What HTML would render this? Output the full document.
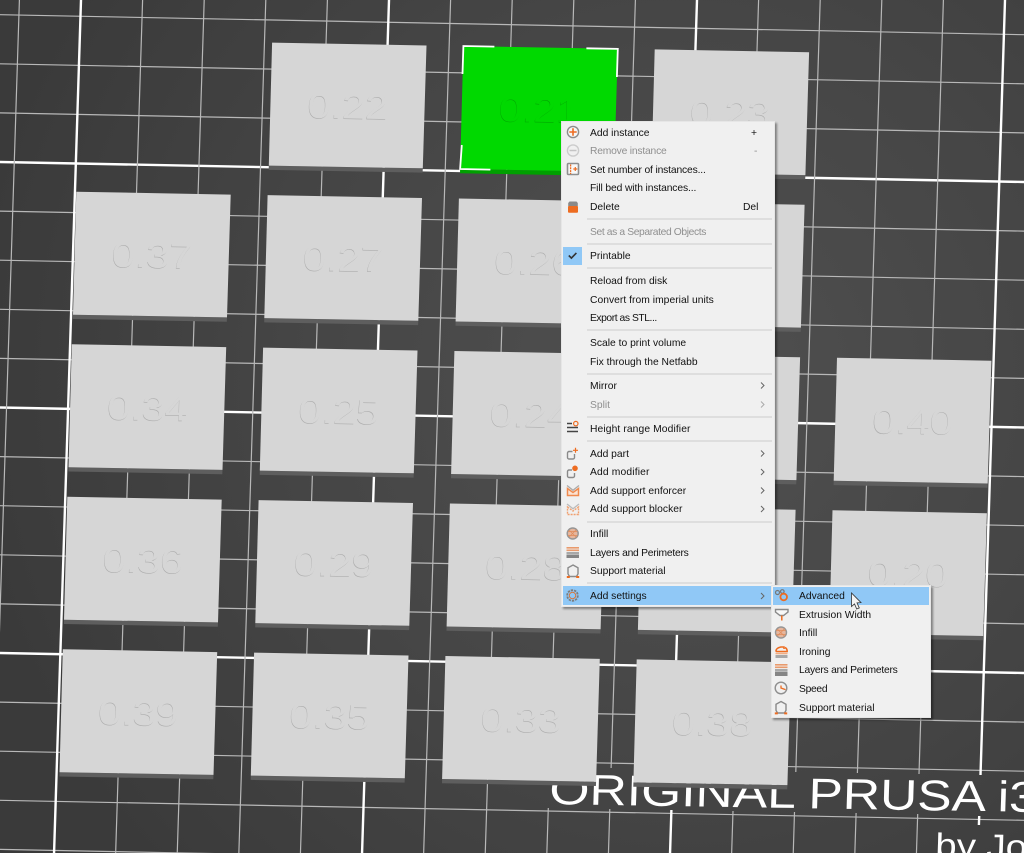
<!DOCTYPE html>
<html><head><meta charset="utf-8"><title>PrusaSlicer</title>
<style>
html,body{margin:0;padding:0;background:#414141}
body{width:1024px;height:853px;position:relative;overflow:hidden;font-family:"Liberation Sans",sans-serif}
svg{position:absolute;left:0;top:0}
.lb{font-family:"Liberation Sans",sans-serif;font-size:35px}
.menu{position:absolute;background:#f0f0f0;border:1px solid #e6e6e6;box-sizing:border-box;box-shadow:2px 2px 2px rgba(0,0,0,.4)}
.h{position:absolute;background:#90c8f6}
.s{position:absolute;left:587px;width:185px;height:2px;background:#dedede}
.t{position:absolute;font-size:10.3px;line-height:14px;color:#111;white-space:nowrap;left:590px;margin-top:1.5px;filter:blur(.2px)}
.d{color:#8f8f8f}
.u{left:799px}
.a{left:auto;text-align:right}
.ic{filter:blur(.25px)}
</style></head><body>
<svg width="1024" height="853" viewBox="0 0 1024 853">
<defs>
<radialGradient id="bg" gradientUnits="userSpaceOnUse" cx="680" cy="380" r="720">
<stop offset="0" stop-color="#505050"/><stop offset=".55" stop-color="#454545"/><stop offset="1" stop-color="#3a3a3a"/></radialGradient>
<g id="p"><polygon points="-3.3,123 150.7,125.7 150.5,130 -3.4,127.3" fill="#5e5e5e"/><polygon points="0,0 154.4,2.9 150.7,125.7 -3.3,123" fill="#d6d6d6"/></g>
</defs>
<rect width="1024" height="853" fill="url(#bg)"/>
<path fill="none" stroke="#b8b8b8" stroke-width="1.2" d="M0 14.7L1024 34.7M0 63.8L1024 83.8M0 112.9L1024 132.9M0 211.1L1024 231.1M0 260.2L1024 280.2M0 309.3L1024 329.3M0 358.4L1024 378.4M0 456.6L1024 476.6M0 505.7L1024 525.7M0 554.8L1024 574.8M0 603.9L1024 623.9M0 702.1L1024 722.1M0 751.2L1024 771.2M0 800.3L1024 820.3M0 849.4L1024 869.4"/>
<path fill="none" stroke="#ffffff" stroke-width="2.4" d="M0 162L1024 182M0 407.5L1024 427.5M0 653L1024 673"/>
<path fill="none" stroke="#b8b8b8" stroke-width="1.2" d="M19.4 0L-7.55 853M142.6 0L115.65 853M204.2 0L177.25 853M265.8 0L238.85 853M327.4 0L300.45 853M450.6 0L423.65 853M512.2 0L485.25 853M573.8 0L549.6 767M548.3 808L546.85 853M635.4 0L611.1 768M609.8 809L608.45 853M758.6 0L734.3 770M733 811L731.65 853M820.2 0L795.8 772M794.5 812L793.25 853M881.8 0L857.4 773M856.1 813L854.85 853M943.4 0L919 774M917.7 814L916.45 853"/>
<path fill="none" stroke="#ffffff" stroke-width="2.4" d="M81 0L54.05 853M389 0L362.05 853M697 0L672.7 769M671.4 810L670.05 853M1005 0L980.5 775M979.2 816L978.9 825"/>

<text transform="matrix(1.2,.0195,-.03,1,549,804)" font-family="Liberation Sans" font-size="43" fill="#fff">ORIGINAL PRUSA i3</text>
<text transform="matrix(1.13,.0195,-.03,1,935,857)" font-family="Liberation Sans" font-size="34" fill="#fff">by Josef Prusa</text>

<g transform="translate(272.1,42.6)"><use href="#p"/><g class="lb"><text transform="matrix(1.18,.0195,-.03,1,34.8,75.8)" fill="#adadad">0.22</text><text transform="matrix(1.18,.0195,-.03,1,35.2,75.2)" fill="#d6d6d6">0.22</text></g></g>
<g transform="translate(463.4,46)"><polygon points="-3.3,123 150.7,125.7 150.5,130 -3.4,127.3" fill="#00a000"/><polygon points="0,0 154.4,2.9 150.7,125.7 -3.3,123" fill="#00d900"/><g class="lb"><text transform="matrix(1.18,.0195,-.03,1,34.8,75.8)" fill="#00a800">0.21</text><text transform="matrix(1.18,.0195,-.03,1,35.2,75.2)" fill="#00d900">0.21</text></g>
<path fill="none" stroke="#fff" stroke-width="1.8" d="M31 .6L0 0L-.9 28M123 2.3L154.4 2.9L153.5 31M-1.6 99L-3.3 123L27 123.6"/></g>
<g transform="translate(654.7,49.4)"><use href="#p"/><g class="lb"><text transform="matrix(1.18,.0195,-.03,1,34.8,75.8)" fill="#adadad">0.23</text><text transform="matrix(1.18,.0195,-.03,1,35.2,75.2)" fill="#d6d6d6">0.23</text></g></g>

<g transform="translate(76.3,191.7)"><use href="#p"/><g class="lb"><text transform="matrix(1.18,.0195,-.03,1,34.8,75.8)" fill="#adadad">0.37</text><text transform="matrix(1.18,.0195,-.03,1,35.2,75.2)" fill="#d6d6d6">0.37</text></g></g>
<g transform="translate(267.6,195.1)"><use href="#p"/><g class="lb"><text transform="matrix(1.18,.0195,-.03,1,34.8,75.8)" fill="#adadad">0.27</text><text transform="matrix(1.18,.0195,-.03,1,35.2,75.2)" fill="#d6d6d6">0.27</text></g></g>
<g transform="translate(458.9,198.5)"><use href="#p"/><g class="lb"><text transform="matrix(1.18,.0195,-.03,1,34.8,75.8)" fill="#adadad">0.26</text><text transform="matrix(1.18,.0195,-.03,1,35.2,75.2)" fill="#d6d6d6">0.26</text></g></g>
<g transform="translate(650.2,201.9)"><use href="#p"/></g>

<g transform="translate(71.8,344.2)"><use href="#p"/><g class="lb"><text transform="matrix(1.18,.0195,-.03,1,34.8,75.8)" fill="#adadad">0.34</text><text transform="matrix(1.18,.0195,-.03,1,35.2,75.2)" fill="#d6d6d6">0.34</text></g></g>
<g transform="translate(263.1,347.6)"><use href="#p"/><g class="lb"><text transform="matrix(1.18,.0195,-.03,1,34.8,75.8)" fill="#adadad">0.25</text><text transform="matrix(1.18,.0195,-.03,1,35.2,75.2)" fill="#d6d6d6">0.25</text></g></g>
<g transform="translate(454.4,351)"><use href="#p"/><g class="lb"><text transform="matrix(1.18,.0195,-.03,1,34.8,75.8)" fill="#adadad">0.24</text><text transform="matrix(1.18,.0195,-.03,1,35.2,75.2)" fill="#d6d6d6">0.24</text></g></g>
<g transform="translate(645.7,354.4)"><use href="#p"/></g>
<g transform="translate(837,357.8)"><use href="#p"/><g class="lb"><text transform="matrix(1.18,.0195,-.03,1,34.8,75.8)" fill="#adadad">0.40</text><text transform="matrix(1.18,.0195,-.03,1,35.2,75.2)" fill="#d6d6d6">0.40</text></g></g>

<g transform="translate(67.3,496.7)"><use href="#p"/><g class="lb"><text transform="matrix(1.18,.0195,-.03,1,34.8,75.8)" fill="#adadad">0.36</text><text transform="matrix(1.18,.0195,-.03,1,35.2,75.2)" fill="#d6d6d6">0.36</text></g></g>
<g transform="translate(258.6,500.1)"><use href="#p"/><g class="lb"><text transform="matrix(1.18,.0195,-.03,1,34.8,75.8)" fill="#adadad">0.29</text><text transform="matrix(1.18,.0195,-.03,1,35.2,75.2)" fill="#d6d6d6">0.29</text></g></g>
<g transform="translate(449.9,503.5)"><use href="#p"/><g class="lb"><text transform="matrix(1.18,.0195,-.03,1,34.8,75.8)" fill="#adadad">0.28</text><text transform="matrix(1.18,.0195,-.03,1,35.2,75.2)" fill="#d6d6d6">0.28</text></g></g>
<g transform="translate(641.2,506.9)"><use href="#p"/></g>
<g transform="translate(832.5,510.3)"><use href="#p"/><g class="lb"><text transform="matrix(1.18,.0195,-.03,1,34.8,75.8)" fill="#adadad">0.20</text><text transform="matrix(1.18,.0195,-.03,1,35.2,75.2)" fill="#d6d6d6">0.20</text></g></g>

<g transform="translate(62.8,649.2)"><use href="#p"/><g class="lb"><text transform="matrix(1.18,.0195,-.03,1,34.8,75.8)" fill="#adadad">0.39</text><text transform="matrix(1.18,.0195,-.03,1,35.2,75.2)" fill="#d6d6d6">0.39</text></g></g>
<g transform="translate(254.1,652.6)"><use href="#p"/><g class="lb"><text transform="matrix(1.18,.0195,-.03,1,34.8,75.8)" fill="#adadad">0.35</text><text transform="matrix(1.18,.0195,-.03,1,35.2,75.2)" fill="#d6d6d6">0.35</text></g></g>
<g transform="translate(445.4,656)"><use href="#p"/><g class="lb"><text transform="matrix(1.18,.0195,-.03,1,34.8,75.8)" fill="#adadad">0.33</text><text transform="matrix(1.18,.0195,-.03,1,35.2,75.2)" fill="#d6d6d6">0.33</text></g></g>
<g transform="translate(636.7,659.4)"><use href="#p"/><g class="lb"><text transform="matrix(1.18,.0195,-.03,1,34.8,75.8)" fill="#adadad">0.38</text><text transform="matrix(1.18,.0195,-.03,1,35.2,75.2)" fill="#d6d6d6">0.38</text></g></g>
</svg>

<div class="menu" style="left:561px;top:121px;width:214px;height:486px"></div>
<div class="h" style="left:563px;top:247px;width:19px;height:18px"></div>
<div class="h" style="left:563px;top:586px;width:208px;height:19px"></div>
<div class="s" style="top:218px"></div><div class="s" style="top:243px"></div><div class="s" style="top:267px"></div><div class="s" style="top:329px"></div><div class="s" style="top:373px"></div><div class="s" style="top:416px"></div><div class="s" style="top:440px"></div><div class="s" style="top:521px"></div><div class="s" style="top:582px"></div>

<div class="t" style="top:125px">Add instance</div>
<div class="t d" style="top:143.5px;letter-spacing:-.2px">Remove instance</div>
<div class="t" style="top:162px;letter-spacing:-.15px">Set number of instances...</div>
<div class="t" style="top:180.5px;letter-spacing:-.12px">Fill bed with instances...</div>
<div class="t" style="top:199px">Delete</div>
<div class="t d" style="top:224px;letter-spacing:-.38px">Set as a Separated Objects</div>
<div class="t" style="top:248.5px">Printable</div>
<div class="t" style="top:273px">Reload from disk</div>
<div class="t" style="top:292px;letter-spacing:.03px">Convert from imperial units</div>
<div class="t" style="top:310.5px;letter-spacing:-.44px">Export as STL...</div>
<div class="t" style="top:335px">Scale to print volume</div>
<div class="t" style="top:354px">Fix through the Netfabb</div>
<div class="t" style="top:378px">Mirror</div>
<div class="t d" style="top:397px">Split</div>
<div class="t" style="top:421.5px;letter-spacing:.1px">Height range Modifier</div>
<div class="t" style="top:446px">Add part</div>
<div class="t" style="top:464.5px;letter-spacing:.15px">Add modifier</div>
<div class="t" style="top:483px">Add support enforcer</div>
<div class="t" style="top:501.5px;letter-spacing:.05px">Add support blocker</div>
<div class="t" style="top:526.5px">Infill</div>
<div class="t" style="top:545px;letter-spacing:-.24px">Layers and Perimeters</div>
<div class="t" style="top:563.5px">Support material</div>
<div class="t" style="top:588.5px">Add settings</div>
<div class="t a" style="top:125px;left:751px">+</div>
<div class="t a d" style="top:143.5px;left:754px">-</div>
<div class="t a" style="top:199px;left:743px">Del</div>

<div class="menu" style="left:771px;top:585px;width:160px;height:133px"></div>
<div class="h" style="left:773px;top:586.5px;width:156px;height:18px"></div>
<div class="t u" style="top:588.5px">Advanced</div>
<div class="t u" style="top:607px">Extrusion Width</div>
<div class="t u" style="top:625.5px">Infill</div>
<div class="t u" style="top:644px">Ironing</div>
<div class="t u" style="top:662.5px;letter-spacing:-.24px">Layers and Perimeters</div>
<div class="t u" style="top:681px;letter-spacing:-.3px">Speed</div>
<div class="t u" style="top:700px">Support material</div>

<svg class="ic" width="1024" height="853" viewBox="0 0 1024 853" fill="none">
<!-- chevrons -->
<path stroke="#666" stroke-width="1" d="M761 382.5l3 3-3 3M761 450.5l3 3-3 3M761 469l3 3-3 3M761 487.5l3 3-3 3M761 506l3 3-3 3M761 593l3 3-3 3"/>
<path stroke="#aaa" stroke-width="1" d="M761 401.5l3 3-3 3"/>
<!-- check -->
<path stroke="#333" stroke-width="1.6" d="M568.8 255.5l2.6 2.6 5-5.2"/>
<!-- add / remove -->
<circle cx="573" cy="132" r="5.6" stroke="#8c8c8c" stroke-width="1.4" fill="#f6f6f6"/>
<path stroke="#ed6c21" stroke-width="1.6" d="M569.3 132h7.4M573 128.3v7.4"/>
<circle cx="573" cy="150.5" r="5.6" stroke="#cccccc" stroke-width="1.4"/>
<path stroke="#c4c4c4" stroke-width="1.5" d="M569.5 150.5h7"/>
<!-- set number -->
<rect x="567.5" y="163.5" width="11" height="11" rx="1" stroke="#8f8f8f" stroke-width="1.6" fill="#f8f8f8"/>
<path stroke="#ed6c21" stroke-width="1.3" d="M570.6 164.5v9.5" stroke-dasharray="2 .8"/>
<path stroke="#ed6c21" stroke-width="1.2" d="M573.3 169h4M575.3 167v4"/>
<!-- delete -->
<path fill="#8a8a8a" d="M569.5 201.5h7l1.3 1.5v3.2h-9.6V203z"/>
<rect x="568" y="206" width="10" height="6.8" rx="1" fill="#ed6c21"/>
<!-- height range -->
<path stroke="#444" stroke-width="1.4" d="M567 423.5h5M567 427.5h11M567 431.5h11"/>
<circle cx="575.8" cy="423.6" r="2.2" stroke="#ed6c21" stroke-width="1.2"/>
<!-- add part -->
<path stroke="#8a8a8a" stroke-width="1.4" d="M572.5 451.5H569a1.5 1.5 0 0 0-1.5 1.5v4.5a1.5 1.5 0 0 0 1.5 1.5h4a1.5 1.5 0 0 0 1.5-1.5V454"/>
<path stroke="#ed6c21" stroke-width="1.2" d="M573 450.3h5M575.5 447.8v5"/>
<!-- add modifier -->
<path stroke="#8a8a8a" stroke-width="1.4" d="M572 470H569a1.5 1.5 0 0 0-1.5 1.5v4.5a1.5 1.5 0 0 0 1.5 1.5h4a1.5 1.5 0 0 0 1.5-1.5V473"/>
<circle cx="575" cy="468.3" r="2.8" fill="#ed6c21"/>
<!-- enforcer -->
<path stroke="#aaa" stroke-width="1.3" d="M567 485.5l6 4.8 6-4.8"/>
<path stroke="#ef8a4e" stroke-width="1.5" fill="#fbe3d3" d="M567.5 488.5l5.5 4 5.5-4v7h-11z"/>
<!-- blocker -->
<path stroke="#bbb" stroke-width="1.3" d="M567 504l6 4.8 6-4.8"/>
<path stroke="#f0a070" stroke-width="1.4" stroke-dasharray="2 1" d="M567.5 507l5.5 4 5.5-4v7.5h-11z"/>
<!-- infill -->
<circle cx="572.7" cy="533.5" r="5.5" fill="#e6b69d" stroke="#969696" stroke-width="1.4"/>
<path stroke="#e08a58" stroke-width=".7" d="M569 530l7.5 7.5M569 537l7.5-7.5M567.8 531.5h9.8M567.8 535.5h9.8"/>
<!-- layers -->
<g><rect x="566.5" y="547" width="12.5" height="1.6" fill="#e99a6c"/><rect x="566.5" y="549.5" width="12.5" height="1.6" fill="#e99a6c"/><rect x="566.5" y="552" width="12.5" height="2" fill="#a8a8a8"/><rect x="566.5" y="554.5" width="12.5" height="3.5" fill="#858585"/></g>
<!-- support -->
<path stroke="#8a8a8a" stroke-width="1.4" d="M573 565l5 2.8v6l-1.5 2.7h-7L568 573.8v-6z"/>
<path stroke="#ed6c21" stroke-width="2" d="M566.8 577h3M576.2 577h3"/>
<!-- gear -->
<circle cx="572.5" cy="595.5" r="5.3" stroke="#7d7d7d" stroke-width="1.8" stroke-dasharray="2.3 1"/>
<circle cx="572.5" cy="595.5" r="3.2" stroke="#d9763a" stroke-width="1"/>

<!-- advanced -->
<circle cx="777.5" cy="592.5" r="2" stroke="#777" stroke-width="1.2"/>
<circle cx="782.3" cy="591.5" r="1.8" stroke="#777" stroke-width="1.2"/>
<circle cx="783.7" cy="597" r="3.3" stroke="#ed6c21" stroke-width="1.8"/>
<!-- extrusion -->
<path stroke="#8a8a8a" stroke-width="1.4" fill="#f8f8f8" d="M775.5 609.5H788V612L783.5 615.5h-3.5L775.5 612z"/>
<path stroke="#ed6c21" stroke-width="1.5" d="M781.8 615.5v5"/>
<!-- infill 2 -->
<circle cx="781" cy="632.5" r="5.5" fill="#e6b69d" stroke="#969696" stroke-width="1.4"/>
<path stroke="#e08a58" stroke-width=".7" d="M777.3 629l7.5 7.5M777.3 636l7.5-7.5M776 630.5h9.8M776 634.5h9.8"/>
<!-- ironing -->
<path stroke="#ed6c21" stroke-width="1.5" d="M775.8 651.5c0-3.2 2.7-4 5-4.5h3.2v2M775.8 651.5h11.4c0-2-1-3.5-2.2-4"/>
<rect x="775.5" y="652.8" width="12" height="1.5" fill="#f0ad84"/>
<rect x="775.5" y="655" width="12" height="3" fill="#a8a8a8"/>
<!-- layers 2 -->
<g><rect x="775" y="664" width="12.5" height="1.6" fill="#e99a6c"/><rect x="775" y="666.5" width="12.5" height="1.6" fill="#e99a6c"/><rect x="775" y="669" width="12.5" height="2" fill="#a8a8a8"/><rect x="775" y="671.5" width="12.5" height="4.5" fill="#858585"/></g>
<!-- speed -->
<circle cx="781" cy="688" r="5.8" stroke="#8f8f8f" stroke-width="1.4"/>
<path stroke="#ed6c21" stroke-width="1.3" d="M781 685.5v2.5l4.5 1.6"/>
<!-- support 2 -->
<path stroke="#8a8a8a" stroke-width="1.4" d="M781 701.5l5 2.8v6l-1.5 2.7h-7L776 710.3v-6z"/>
<path stroke="#ed6c21" stroke-width="2" d="M774.8 713.4h3M784.2 713.4h3"/>
<!-- cursor -->
<path fill="#f4f4f4" stroke="#333" stroke-width=".8" d="M851.5 593v13.5l3-2.6 2.2 5.1 2.6-1.1-2.3-5 4-.3z"/>
</svg>
</body></html>
